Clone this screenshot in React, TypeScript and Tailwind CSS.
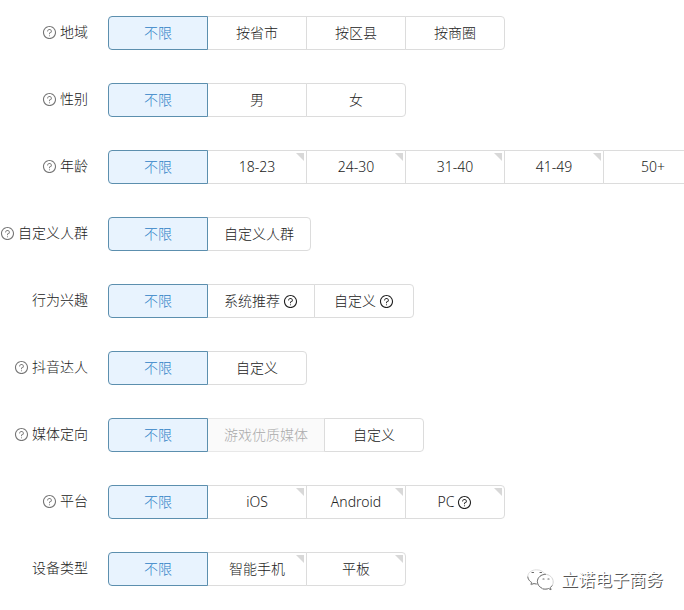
import { useState } from "react";
import clsx from "clsx";
import { AiOutlineQuestionCircle } from "react-icons/ai";

type Option = {
  label: string;
  help?: boolean;
  corner?: boolean;
  disabled?: boolean;
};

type Field = {
  name: string;
  help?: boolean;
  options: Option[];
};

const fields: Field[] = [
  {
    name: "地域",
    help: true,
    options: [{ label: "不限" }, { label: "按省市" }, { label: "按区县" }, { label: "按商圈" }],
  },
  {
    name: "性别",
    help: true,
    options: [{ label: "不限" }, { label: "男" }, { label: "女" }],
  },
  {
    name: "年龄",
    help: true,
    options: [
      { label: "不限" },
      { label: "18-23", corner: true },
      { label: "24-30", corner: true },
      { label: "31-40", corner: true },
      { label: "41-49", corner: true },
      { label: "50+", corner: true },
    ],
  },
  {
    name: "自定义人群",
    help: true,
    options: [{ label: "不限" }, { label: "自定义人群" }],
  },
  {
    name: "行为兴趣",
    options: [
      { label: "不限" },
      { label: "系统推荐", help: true },
      { label: "自定义", help: true },
    ],
  },
  {
    name: "抖音达人",
    help: true,
    options: [{ label: "不限" }, { label: "自定义" }],
  },
  {
    name: "媒体定向",
    help: true,
    options: [{ label: "不限" }, { label: "游戏优质媒体", disabled: true }, { label: "自定义" }],
  },
  {
    name: "平台",
    help: true,
    options: [
      { label: "不限" },
      { label: "iOS", corner: true },
      { label: "Android", corner: true },
      { label: "PC", help: true, corner: true },
    ],
  },
  {
    name: "设备类型",
    options: [
      { label: "不限" },
      { label: "智能手机", corner: true },
      { label: "平板", corner: true },
    ],
  },
];

const Corner = () => (
  <svg viewBox="0 0 8 8" className="absolute top-0.5 right-0.5 w-2 h-2" aria-hidden="true">
    <path d="M0 0h8v8z" fill="#d8d8d8" />
  </svg>
);

const FieldRow = ({ field }: { field: Field }) => {
  const [selected, setSelected] = useState(field.options[0].label);

  return (
    <div className="flex gap-5">
      <div className="flex h-8 w-[88px] shrink-0 items-center justify-end gap-[3px] whitespace-nowrap text-[#222]">
        {field.help && <AiOutlineQuestionCircle className="size-[15px] shrink-0 text-[#777]" />}
        <span id={field.name}>{field.name}</span>
      </div>
      <div role="group" aria-labelledby={field.name} className="flex">
        {field.options.map((option) => {
          const active = option.label === selected;
          return (
            <button
              key={option.label}
              type="button"
              disabled={option.disabled}
              aria-pressed={active}
              onClick={() => setSelected(option.label)}
              className={clsx(
                "relative -ml-px flex h-[34px] min-w-[100px] shrink-0 items-center justify-center gap-[3px] border px-4 whitespace-nowrap first:ml-0 first:rounded-l last:rounded-r",
                active && "z-10 border-[#5c8fae] bg-[#e8f3fe] text-[#2f82c6]",
                !active && !option.disabled && "border-[#dcdcdc] bg-white text-[#222]",
                option.disabled && "border-[#e8e8e8] bg-[#fafafa] text-[#aaa]"
              )}
            >
              {option.label}
              {option.help && <AiOutlineQuestionCircle className="size-[15px] shrink-0" />}
              {option.corner && <Corner />}
            </button>
          );
        })}
      </div>
    </div>
  );
};

// outline only: the white bubbles show just their shaded edges
const WechatMark = () => (
  <svg
    viewBox="0 0 28 22"
    className="h-[22px] w-7"
    fill="none"
    strokeLinecap="round"
    aria-hidden="true"
  >
    <path
      d="M10 15c-1 .1-2-.1-3-.4L4 16l.6-2.600C2.300 12 .8 9.800.8 7.300.8 3.600 4.800.8 9.500.8c4 0 7.300 1.700 8.300 4.300"
      stroke="#ddd"
    />
    <path d="M.8 8c.3 2.200 1.500 4 3.800 5.400L4 15.500l3-1c1 .3 2 .5 3 .5" stroke="#777" strokeDasharray="4 1" />
    <path
      d="M18.200 5.300c-4.300 0-7.800 3.200-7.800 7.200s3.500 7.500 8.300 7.500c1 0 2-.2 2.800-.5l2.500 1.300-.6-2.300c1.700-1.300 2.800-3.300 2.800-5.500 0-4.200-3.500-7.700-8-7.700z"
      stroke="#d4d4d4"
    />
    <path d="M18.500 5.300c-4.400 0-8.100 3.200-8.100 7.200 0 3 1.800 5.500 4.600 6.800" stroke="#777" />
    <path d="M16 20c2 .4 4 .2 5.500-.5l2.500 1.300-.6-2.300 1.600-1.700" stroke="#777" />
    <path d="M5 3.500h1.500M13 3.500h1.500M16 10h1M21 10h1" stroke="#666" strokeWidth="1.200" />
  </svg>
);

const App = () => {
  return (
    <main className="relative min-h-screen overflow-x-hidden bg-white py-4 font-['Noto_Sans','Noto_Sans_CJK_SC',sans-serif] text-sm font-light">
      <div className="flex flex-col gap-[33px]">
        {fields.map((field) => (
          <FieldRow key={field.name} field={field} />
        ))}
      </div>
      <div className="absolute right-[21px] bottom-[18px] flex items-center gap-1.5">
        <WechatMark />
        <span className="text-[17px] leading-6 font-normal text-white [text-shadow:1px_1px_0_#555]">
          立诺电子商务
        </span>
      </div>
    </main>
  );
};

export default App;
